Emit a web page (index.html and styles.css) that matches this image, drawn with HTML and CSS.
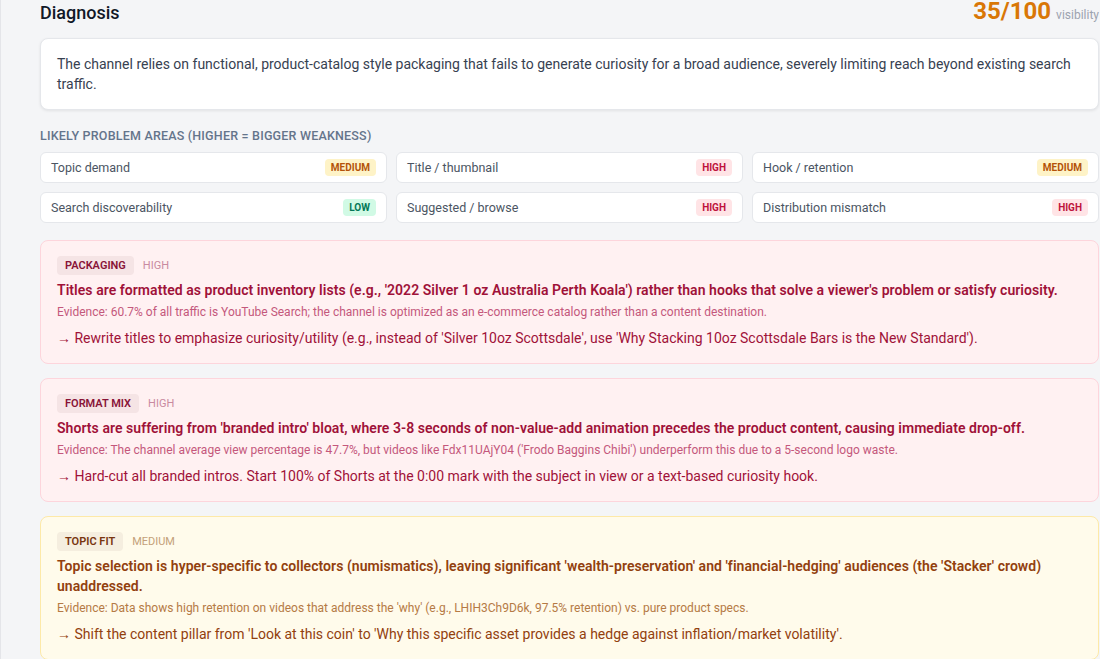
FILE: index.html
```html
<!DOCTYPE html>
<html lang="en">
<head>
<meta charset="utf-8">
<title>Diagnosis</title>
<link rel="stylesheet" href="styles.css">
</head>
<body>
<div class="page">
  <header class="head">
    <h2 class="title">Diagnosis</h2>
    <div class="score"><span class="score-num">35/100</span><span class="score-lbl">visibility</span></div>
  </header>

  <section class="summary">
    The channel relies on functional, product-catalog style packaging that fails to generate curiosity for a broad audience, severely limiting reach beyond existing search traffic.
  </section>

  <div class="section-label">Likely problem areas (higher = bigger weakness)</div>

  <div class="areas">
    <div class="area"><span>Topic demand</span><span class="badge medium">Medium</span></div>
    <div class="area"><span>Title / thumbnail</span><span class="badge high">High</span></div>
    <div class="area"><span>Hook / retention</span><span class="badge medium">Medium</span></div>
    <div class="area"><span>Search discoverability</span><span class="badge low">Low</span></div>
    <div class="area"><span>Suggested / browse</span><span class="badge high">High</span></div>
    <div class="area"><span>Distribution mismatch</span><span class="badge high">High</span></div>
  </div>

  <div class="issues">
    <article class="issue rose">
      <div class="issue-top"><span class="tag">Packaging</span><span class="sev">High</span></div>
      <div class="issue-title">Titles are formatted as product inventory lists (e.g., '2022 Silver 1 oz Australia Perth Koala') rather than hooks that solve a viewer's problem or satisfy curiosity.</div>
      <div class="evidence">Evidence: 60.7% of all traffic is YouTube Search; the channel is optimized as an e-commerce catalog rather than a content destination.</div>
      <div class="action">→ Rewrite titles to emphasize curiosity/utility (e.g., instead of 'Silver 10oz Scottsdale', use 'Why Stacking 10oz Scottsdale Bars is the New Standard').</div>
    </article>

    <article class="issue rose">
      <div class="issue-top"><span class="tag">Format mix</span><span class="sev">High</span></div>
      <div class="issue-title">Shorts are suffering from 'branded intro' bloat, where 3-8 seconds of non-value-add animation precedes the product content, causing immediate drop-off.</div>
      <div class="evidence">Evidence: The channel average view percentage is 47.7%, but videos like Fdx11UAjY04 ('Frodo Baggins Chibi') underperform this due to a 5-second logo waste.</div>
      <div class="action">→ Hard-cut all branded intros. Start 100% of Shorts at the 0:00 mark with the subject in view or a text-based curiosity hook.</div>
    </article>

    <article class="issue amber">
      <div class="issue-top"><span class="tag">Topic fit</span><span class="sev">Medium</span></div>
      <div class="issue-title">Topic selection is hyper-specific to collectors (numismatics), leaving significant 'wealth-preservation' and 'financial-hedging' audiences (the 'Stacker' crowd) unaddressed.</div>
      <div class="evidence">Evidence: Data shows high retention on videos that address the 'why' (e.g., LHIH3Ch9D6k, 97.5% retention) vs. pure product specs.</div>
      <div class="action">→ Shift the content pillar from 'Look at this coin' to 'Why this specific asset provides a hedge against inflation/market volatility'.</div>
    </article>
  </div>
</div>
</body>
</html>
```

FILE: styles.css
```css
* { box-sizing: border-box; }

html, body {
  margin: 0;
  padding: 0;
  background: #f4f5f7;
  font-family: Roboto, "Noto Sans", sans-serif;
  color: #374151;
}

.page {
  border-left: 1px solid #e4e5e9;
  padding: 0 1px 40px 39px;
  min-height: 659px;
}

.head {
  display: flex;
  justify-content: space-between;
  align-items: baseline;
  height: 23px;
}

.title {
  margin: 0;
  font-size: 18px;
  line-height: 22px;
  font-weight: 500;
  color: #111827;
}

.score {
  display: flex;
  align-items: baseline;
  gap: 5px;
}

.score-num {
  font-size: 24px;
  line-height: 22px;
  font-weight: 700;
  color: #d97706;
}

.score-lbl {
  font-size: 12px;
  color: #9ca3af;
}

.summary {
  margin-top: 15px;
  background: #ffffff;
  border: 1px solid #e5e7eb;
  border-radius: 8px;
  box-shadow: 0 1px 3px rgba(0, 0, 0, 0.08);
  padding: 15px 16px 15px 16px;
  font-size: 14px;
  line-height: 20px;
  color: #374151;
}

.section-label {
  margin-top: 18px;
  font-size: 12.5px;
  line-height: 16px;
  font-weight: 500;
  text-transform: uppercase;
  letter-spacing: 0.2px;
  color: #64748b;
}

.areas {
  margin-top: 8px;
  display: grid;
  grid-template-columns: repeat(3, 1fr);
  gap: 9px 9px;
}

.area {
  height: 31px;
  display: flex;
  align-items: center;
  justify-content: space-between;
  background: #ffffff;
  border: 1px solid #e5e7eb;
  border-radius: 6px;
  padding: 0 10px 0 10px;
  font-size: 12.5px;
  color: #4b5563;
}

.badge {
  font-size: 10px;
  font-weight: 700;
  text-transform: uppercase;
  line-height: 17px;
  padding: 0 6px;
  border-radius: 4px;
}

.badge.medium { background: #fef3c7; color: #b45309; }
.badge.high { background: #ffe4e6; color: #be123c; }
.badge.low { background: #d1fae5; color: #047857; }

.issues {
  margin-top: 17px;
  display: flex;
  flex-direction: column;
  gap: 14px;
}

.issue {
  border: 1px solid;
  border-radius: 8px;
  padding: 15px 16px 15px 16px;
  display: flex;
  flex-direction: column;
}

.issue.rose { background: #fff1f2; border-color: #fdd5dc; color: #9f1239; }
.issue.amber { background: #fffbeb; border-color: #fde9a8; color: #92400e; }

.issue-top {
  display: flex;
  align-items: center;
  gap: 9px;
}

.tag {
  font-size: 11px;
  font-weight: 600;
  text-transform: uppercase;
  line-height: 19px;
  padding: 0 8px;
  border-radius: 4px;
  background: rgba(80, 40, 40, 0.06);
}

.rose .tag { color: #881337; }
.amber .tag { color: #78350f; }

.sev {
  font-size: 11px;
  text-transform: uppercase;
}

.rose .sev { color: #c98aa0; }
.amber .sev { color: #c4a079; }

.issue-title {
  margin-top: 5px;
  font-size: 14px;
  line-height: 20px;
  font-weight: 600;
  letter-spacing: 0.05px;
}

.evidence {
  margin-top: 4px;
  font-size: 12px;
  line-height: 17px;
}

.rose .evidence { color: #c4587c; }
.amber .evidence { color: #b57a45; }

.action {
  margin-top: 7px;
  font-size: 14px;
  line-height: 20px;
}
```
